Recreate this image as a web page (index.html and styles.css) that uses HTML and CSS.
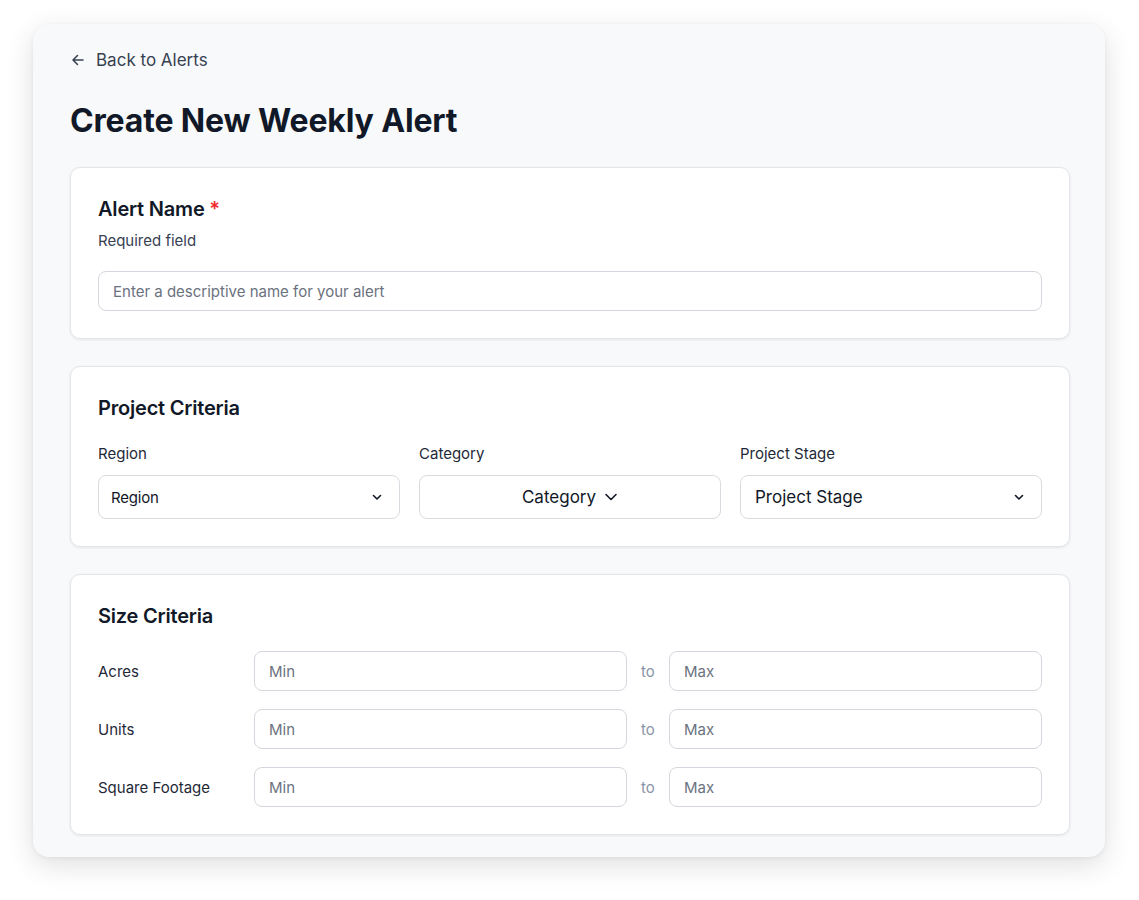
FILE: index.html
```html
<!DOCTYPE html>
<html lang="en">
<head>
<meta charset="utf-8">
<title>Create New Weekly Alert</title>
<link rel="stylesheet" href="styles.css">
</head>
<body>
<div class="frame">
  <a class="back" href="#">
    <svg class="back-icon" viewBox="0 0 16 16" width="16" height="16" fill="none" stroke="currentColor" stroke-width="1.5" stroke-linecap="round" stroke-linejoin="round"><path d="M13 8H3.5M7.5 3.5L3 8l4.5 4.5"/></svg>
    <span>Back to Alerts</span>
  </a>
  <h1 class="page-title">Create New Weekly Alert</h1>

  <section class="card">
    <h2 class="card-title">Alert Name <span class="req">*</span></h2>
    <p class="hint">Required field</p>
    <input class="input name-input" type="text" placeholder="Enter a descriptive name for your alert">
  </section>

  <section class="card">
    <h2 class="card-title">Project Criteria</h2>
    <div class="crit-grid">
      <div class="field">
        <label class="field-label">Region</label>
        <div class="select select-left select-sm">
          <span>Region</span>
          <svg class="chev" viewBox="0 0 12 12" width="12" height="12" fill="none" stroke="currentColor" stroke-width="1.6" stroke-linecap="round" stroke-linejoin="round"><path d="M2.5 4.5L6 8l3.5-3.5"/></svg>
        </div>
      </div>
      <div class="field">
        <label class="field-label">Category</label>
        <div class="select select-center">
          <span>Category</span>
          <svg class="chev chev-lg" viewBox="0 0 14 14" width="14" height="14" fill="none" stroke="currentColor" stroke-width="1.6" stroke-linecap="round" stroke-linejoin="round"><path d="M2 4.5L7 9.5l5-5"/></svg>
        </div>
      </div>
      <div class="field">
        <label class="field-label">Project Stage</label>
        <div class="select select-left">
          <span>Project Stage</span>
          <svg class="chev" viewBox="0 0 12 12" width="12" height="12" fill="none" stroke="currentColor" stroke-width="1.6" stroke-linecap="round" stroke-linejoin="round"><path d="M2.5 4.5L6 8l3.5-3.5"/></svg>
        </div>
      </div>
    </div>
  </section>

  <section class="card">
    <h2 class="card-title">Size Criteria</h2>
    <div class="size-rows">
      <div class="size-row">
        <span class="size-label">Acres</span>
        <input class="input" type="text" placeholder="Min">
        <span class="to">to</span>
        <input class="input" type="text" placeholder="Max">
      </div>
      <div class="size-row">
        <span class="size-label">Units</span>
        <input class="input" type="text" placeholder="Min">
        <span class="to">to</span>
        <input class="input" type="text" placeholder="Max">
      </div>
      <div class="size-row">
        <span class="size-label">Square Footage</span>
        <input class="input" type="text" placeholder="Min">
        <span class="to">to</span>
        <input class="input" type="text" placeholder="Max">
      </div>
    </div>
  </section>
</div>
</body>
</html>
```

FILE: styles.css
```css
* { box-sizing: border-box; }

html, body {
  margin: 0;
  padding: 0;
  background: #ffffff;
  font-family: Inter, "Noto Sans", "Liberation Sans", sans-serif;
  color: #111827;
}

body {
  padding: 24px 34px 42px 33px;
}

.frame {
  width: 1072px;
  height: 833px;
  background: #f8f9fb;
  border-radius: 16px;
  box-shadow: 0 8px 28px rgba(0, 0, 0, 0.13), 0 1px 4px rgba(0, 0, 0, 0.05);
  padding: 24px 35px 23px 37px;
}

.back {
  display: inline-flex;
  align-items: center;
  gap: 10px;
  color: #374151;
  text-decoration: none;
  font-size: 17px;
  line-height: 24px;
  height: 24px;
}

.back-icon { color: #374151; }

.page-title {
  margin: 29px 0 26px;
  font-size: 32px;
  line-height: 40px;
  font-weight: 700;
  color: #111827;
  letter-spacing: -0.15px;
}

.card {
  background: #ffffff;
  border: 1px solid #e3e5e9;
  border-radius: 10px;
  box-shadow: 0 1px 3px rgba(0, 0, 0, 0.08);
  padding: 27px;
  margin-bottom: 27px;
}

.card-title {
  margin: 0;
  font-size: 20px;
  line-height: 28px;
  font-weight: 600;
  color: #111827;
  letter-spacing: -0.2px;
}

.req { color: #ef2b2b; }

.hint {
  margin: 7px 0 0;
  font-size: 15px;
  line-height: 22px;
  color: #374151;
}

.input {
  display: block;
  width: 100%;
  height: 40px;
  border: 1px solid #d4d7dd;
  border-radius: 8px;
  background: #ffffff;
  padding: 0 14px;
  font-family: inherit;
  font-size: 15px;
  color: #111827;
  outline: none;
}

.input::placeholder { color: #6b7280; }

.name-input { margin-top: 19px; }

.crit-grid {
  display: grid;
  grid-template-columns: 1fr 1fr 1fr;
  gap: 19px;
  margin-top: 21px;
}

.field-label {
  display: block;
  font-size: 15px;
  line-height: 22px;
  color: #1f2937;
  margin-bottom: 10px;
}

.select {
  height: 44px;
  border: 1px solid #d9dbe0;
  border-radius: 8px;
  background: #ffffff;
  display: flex;
  align-items: center;
  font-size: 17px;
  color: #111827;
}

.select-left {
  justify-content: space-between;
  padding: 0 16px 0 14px;
}

.select-sm {
  font-size: 15px;
  letter-spacing: -0.2px;
  padding-left: 12px;
}

.select-center {
  justify-content: center;
  gap: 8px;
}

.chev { color: #111827; }

.size-rows {
  display: flex;
  flex-direction: column;
  gap: 18px;
  margin-top: 21px;
}

.size-row {
  display: grid;
  grid-template-columns: 156px 1fr 42px 1fr;
  align-items: center;
}

.size-label {
  font-size: 15px;
  color: #1f2937;
}

.to {
  font-size: 15px;
  color: #8b95a7;
  text-align: center;
}
```
